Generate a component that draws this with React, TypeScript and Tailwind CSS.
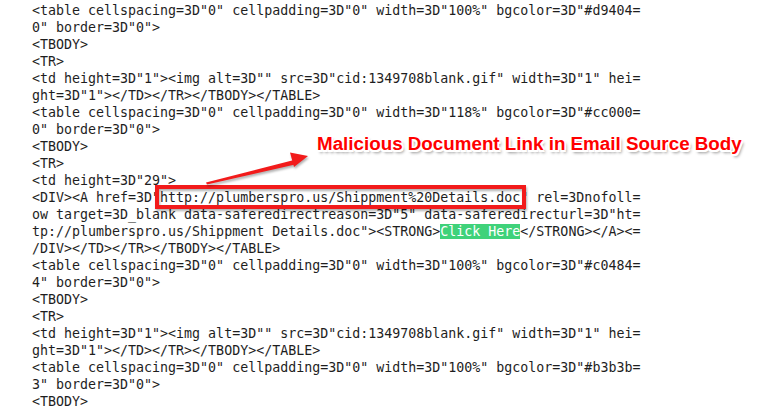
const lines: string[] = [
  '<table cellspacing=3D"0" cellpadding=3D"0" width=3D"100%" bgcolor=3D"#d9404=',
  '0" border=3D"0">',
  "<TBODY>",
  "<TR>",
  '<td height=3D"1"><img alt=3D"" src=3D"cid:1349708blank.gif" width=3D"1" hei=',
  'ght=3D"1"></TD></TR></TBODY></TABLE>',
  '<table cellspacing=3D"0" cellpadding=3D"0" width=3D"118%" bgcolor=3D"#cc000=',
  '0" border=3D"0">',
  "<TBODY>",
  "<TR>",
  '<td height=3D"29">',
  '<DIV><A href=3D"http://plumberspro.us/Shippment%20Details.doc" rel=3Dnofoll=',
  'ow target=3D_blank data-saferedirectreason=3D"5" data-saferedirecturl=3D"ht=',
  "CLICK",
  "/DIV></TD></TR></TBODY></TABLE>",
  '<table cellspacing=3D"0" cellpadding=3D"0" width=3D"100%" bgcolor=3D"#c0484=',
  '4" border=3D"0">',
  "<TBODY>",
  "<TR>",
  '<td height=3D"1"><img alt=3D"" src=3D"cid:1349708blank.gif" width=3D"1" hei=',
  'ght=3D"1"></TD></TR></TBODY></TABLE>',
  '<table cellspacing=3D"0" cellpadding=3D"0" width=3D"100%" bgcolor=3D"#b3b3b=',
  '3" border=3D"0">',
  "<TBODY>",
];

function CodeLine({ text }: { text: string }) {
  if (text === "CLICK") {
    return (
      <div className="h-[17px] whitespace-pre">
        {'tp://plumberspro.us/Shippment Details.doc"><STRONG>'}
        <span className="bg-[#3fd27a] text-white">Click Here</span>
        {"</STRONG></A><="}
      </div>
    );
  }
  return <div className="h-[17px] whitespace-pre">{text}</div>;
}

export default function App() {
  return (
    <div className="relative w-[763px] h-[409px] overflow-hidden bg-white">
      {/* email source */}
      <div className="flex flex-col pl-[32px] pt-[2px] text-[13.3px] leading-[17px] text-[#1e1e1e] font-['DejaVu_Sans_Mono','Liberation_Mono',monospace]">
        {lines.map((l, i) => (
          <CodeLine key={i} text={l} />
        ))}
      </div>

      {/* highlight box around link */}
      <div className="absolute left-[155px] top-[185px] w-[371px] h-[24px] border-4 border-[#f21b1b] drop-shadow-[1px_2px_1px_rgba(0,0,0,0.3)]" />

      {/* arrow */}
      <svg
        className="absolute left-0 top-0 drop-shadow-[1px_2px_1px_rgba(0,0,0,0.3)]"
        width="763"
        height="409"
      >
        <polygon
          points="206,182.5 294,160 295,164.5 207,184.5"
          fill="#f21b1b"
        />
        <polygon points="308,156 290,152.5 294,167" fill="#f21b1b" />
      </svg>

      {/* annotation */}
      <div
        className="absolute left-[317px] top-[132px] text-[18.8px] leading-[24px] font-bold text-[#ff0000] whitespace-nowrap font-['Liberation_Sans',Arial,sans-serif]"
        style={{
          textShadow:
            "-1.5px 0 0 #fff, 1.5px 0 0 #fff, 0 -1.5px 0 #fff, 0 1.5px 0 #fff, -1.5px -1.5px 0 #fff, 1.5px 1.5px 0 #fff, -1.5px 1.5px 0 #fff, 1.5px -1.5px 0 #fff, 2px 3px 3px rgba(0,0,0,0.45)",
        }}
      >
        Malicious Document Link in Email Source Body
      </div>
    </div>
  );
}
